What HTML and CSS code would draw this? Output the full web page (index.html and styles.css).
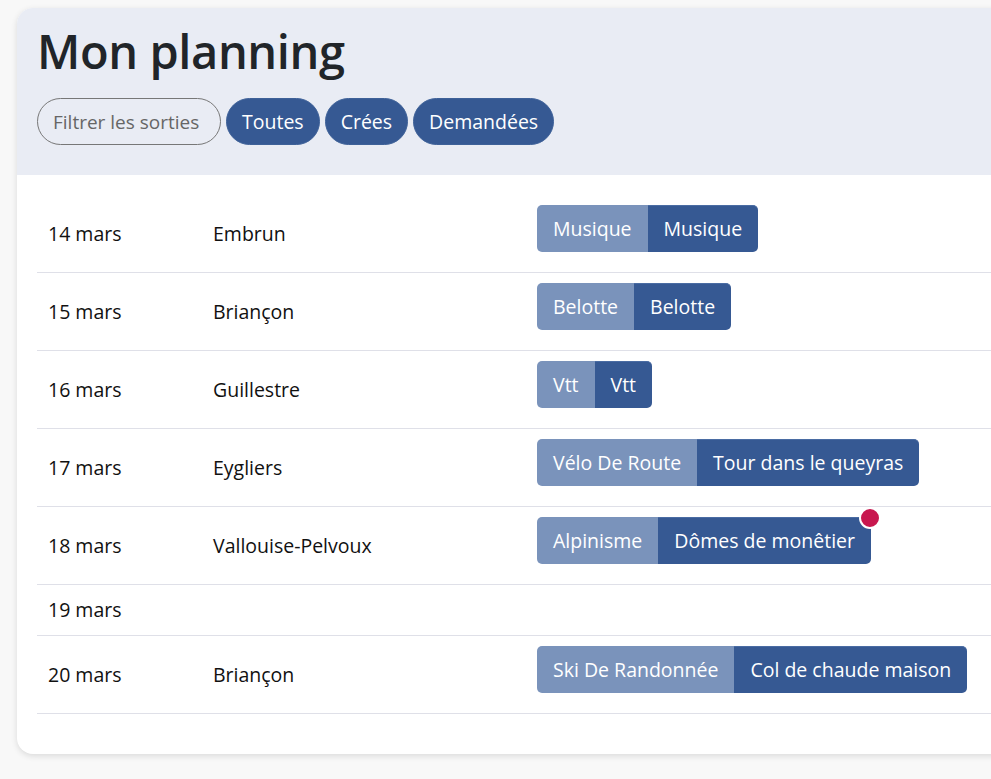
FILE: index.html
```html
<!DOCTYPE html>
<html lang="fr">
<head>
<meta charset="utf-8">
<title>Mon planning</title>
<link rel="stylesheet" href="styles.css">
</head>
<body>
<div class="page">
  <section class="card">
    <header class="card-head">
      <h1 class="title">Mon planning</h1>
      <div class="filters">
        <input class="filter-input" type="text" placeholder="Filtrer les sorties">
        <button class="pill">Toutes</button>
        <button class="pill">Crées</button>
        <button class="pill">Demandées</button>
      </div>
    </header>
    <div class="card-body">
      <table class="planning">
        <colgroup><col class="c-date"><col class="c-place"><col></colgroup>
        <tbody>
          <tr><td>14 mars</td><td>Embrun</td><td><div class="grp"><span class="tag light">Musique</span><span class="tag dark">Musique</span></div></td></tr>
          <tr><td>15 mars</td><td>Briançon</td><td><div class="grp"><span class="tag light">Belotte</span><span class="tag dark">Belotte</span></div></td></tr>
          <tr><td>16 mars</td><td>Guillestre</td><td><div class="grp"><span class="tag light">Vtt</span><span class="tag dark">Vtt</span></div></td></tr>
          <tr><td>17 mars</td><td>Eygliers</td><td><div class="grp"><span class="tag light">Vélo De Route</span><span class="tag dark">Tour dans le queyras</span></div></td></tr>
          <tr><td>18 mars</td><td>Vallouise-Pelvoux</td><td><div class="grp"><span class="tag light">Alpinisme</span><span class="tag dark">Dômes de monêtier<span class="dot"></span></span></div></td></tr>
          <tr class="empty"><td>19 mars</td><td></td><td></td></tr>
          <tr><td>20 mars</td><td>Briançon</td><td><div class="grp"><span class="tag light">Ski De Randonnée</span><span class="tag dark">Col de chaude maison</span></div></td></tr>
        </tbody>
      </table>
    </div>
  </section>
</div>
</body>
</html>
```
FILE: styles.css
```css
html, body {
  margin: 0;
  padding: 0;
  background: #f8f8f8;
  overflow: hidden;
}
body {
  font-family: "Open Sans", "Noto Sans", sans-serif;
  color: #111;
}
.page {
  width: 991px;
  height: 779px;
  overflow: hidden;
  padding: 8px 0 0 17px;
  box-sizing: border-box;
}
.card {
  width: 1100px;
  background: #fff;
  border-radius: 16px;
  box-shadow: 0 2px 6px rgba(0,0,0,0.12);
  overflow: hidden;
}
.card-head {
  background: #e9ecf4;
  padding: 14px 20px 30px 20px;
}
.title {
  margin: 0 0 18px 0;
  font-size: 47px;
  font-weight: 600;
  line-height: 58px;
  color: #212529;
  letter-spacing: -0.4px;
}
.filters {
  display: flex;
  gap: 5px;
  align-items: center;
}
.filter-input {
  width: 184px;
  height: 47px;
  box-sizing: border-box;
  border: 1px solid #777;
  border-radius: 24px;
  background: transparent;
  padding: 0 10px 0 15px;
  font: inherit;
  font-size: 19px;
  color: #666;
}
.filter-input::placeholder { color: #666; }
.pill {
  height: 47px;
  border: 1px solid #3e6198;
  border-radius: 24px;
  background: #365993;
  color: #fff;
  font: inherit;
  font-size: 19.5px;
  padding: 0 15px;
}
.card-body {
  padding: 20px 20px 40px 20px;
}
.planning {
  width: 100%;
  border-collapse: collapse;
  font-size: 19.5px;
}
.c-date { width: 165px; }
.c-place { width: 324px; }
.planning td {
  padding: 13px 11px;
  line-height: 24px;
  border-bottom: 1px solid #dfe0e8;
  vertical-align: middle;
}
.grp {
  display: flex;
  margin: -3px 0 7px 0;
}
.tag {
  height: 47px;
  box-sizing: border-box;
  display: flex;
  align-items: center;
  padding: 0 16px;
  color: #fff;
  white-space: nowrap;
}
.tag.light {
  background: #7a93bb;
  border-radius: 5px 0 0 5px;
}
.tag.dark {
  position: relative;
  background: #365993;
  border-top: 1px solid #4a6ca3;
  border-radius: 0 5px 5px 0;
}
.dot {
  position: absolute;
  top: -11px;
  right: -10px;
  width: 18px;
  height: 18px;
  background: #c8174f;
  border: 2px solid #fff;
  border-radius: 50%;
}
```
